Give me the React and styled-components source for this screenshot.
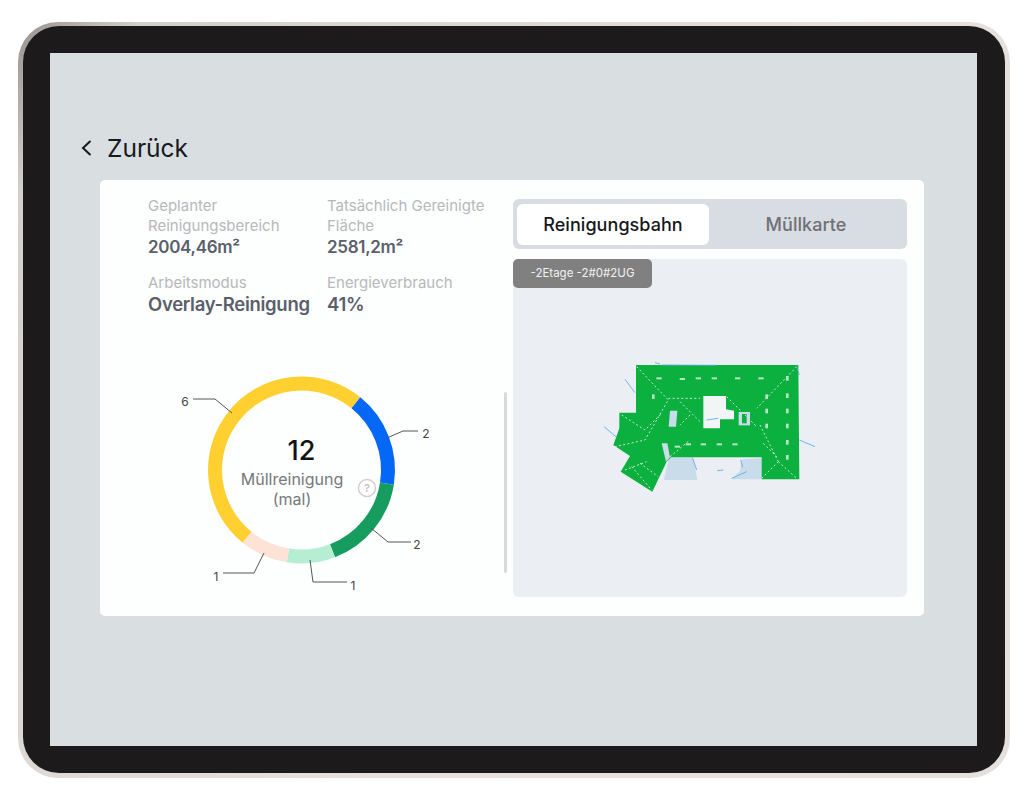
import React from "react";
import styled, { createGlobalStyle } from "styled-components";

const GlobalStyle = createGlobalStyle`
  html, body {
    margin: 0;
    padding: 0;
    background: #ffffff;
    font-family: Inter, "Noto Sans", sans-serif;
  }
`;

// Donut data, angles in degrees clockwise from the top
const segments = [
  { color: "#ffd02f", from: 219, to: 399 },
  { color: "#0567f5", from: 39, to: 99 },
  { color: "#169c5f", from: 99, to: 159 },
  { color: "#b5eed3", from: 159, to: 189 },
  { color: "#fde3d5", from: 189, to: 219 },
];

const leaders = [
  { points: "28,39 50,39 67,53", value: 6, x: 20, y: 46 },
  { points: "222,78 238,71 253,71", value: 2, x: 261, y: 78 },
  { points: "206,168 223,182 246,182", value: 2, x: 252, y: 189 },
  { points: "145,200 148,222 182,222", value: 1, x: 188, y: 230 },
  { points: "99,193 89,213 58,213", value: 1, x: 51, y: 221 },
];

const arcPath = (from, to) => {
  const cx = 136.5;
  const cy = 110;
  const r = 86.5;
  const point = (deg) => {
    const a = ((deg - 90) * Math.PI) / 180;
    return `${cx + r * Math.cos(a)} ${cy + r * Math.sin(a)}`;
  };
  return `M ${point(from)} A ${r} ${r} 0 ${to - from > 180 ? 1 : 0} 1 ${point(to)}`;
};

const dashes = [
  [207, 85], [277, 87], [325, 85], [373, 85], [443, 85], [513, 85],
  [340, 283], [388, 283], [435, 283], [262, 290], [295, 283],
];
const sideDashes = [
  [592, 85], [592, 137], [592, 183], [592, 228], [592, 277], [592, 322],
  [530, 140], [530, 183], [530, 228], [190, 140],
];
const dotted = [
  "140,50 235,150 165,270 75,290",
  "620,50 500,175",
  "565,335 515,385",
  "565,335 620,385",
  "510,225 565,335",
  "95,195 165,240 215,190",
  "125,350 185,420",
  "150,340 205,380",
  "105,360 170,335",
  "240,320 300,270",
  "410,140 500,230",
  "270,155 330,215",
  "300,195 270,225",
  "235,145 330,145",
  "520,280 560,320",
];
const scatter = [
  "105,88 135,128",
  "42,230 80,262",
  "628,270 675,290",
  "195,38 210,42",
  "215,45 380,46",
  "308,325 320,360",
  "452,330 458,352",
  "425,385 470,365",
  "382,362 400,360",
  "620,50 628,75",
  "350,210 385,205",
];

const MapDrawing = () => (
  <MapSvg viewBox="0 0 720 450">
    <polygon points="238,322 310,322 322,390 222,390" fill="#c9dcea" />
    <polygon points="515,325 515,388 425,388 450,362 455,328" fill="#c9dcea" />
    <polygon
      points="138,45 625,45 628,388 515,388 515,322 243,322 230,335 187,425 92,365 120,318 70,285 88,235 88,188 138,188"
      fill="#0bb03f"
    />
    <polygon points="215,280 232,280 240,322 228,335" fill="#c9dcea" />
    <polygon
      points="340,138 408,138 408,178 432,182 432,208 390,208 390,235 340,235"
      fill="#f2f5f6"
    />
    <polygon points="240,182 262,182 258,230 236,230" fill="#c9dcea" />
    <polygon points="446,186 480,186 480,226 446,226" fill="#c9dcea" />
    <polygon points="456,192 470,192 470,220 456,220" fill="#0bb03f" />
    {scatter.map((points) => (
      <Scatter key={points} points={points} />
    ))}
    {dotted.map((points) => (
      <Dotted key={points} points={points} />
    ))}
    {dashes.map(([x, y]) => (
      <rect key={`${x}-${y}`} x={x - 8} y={y - 3} width="16" height="6" fill="#b9e2c6" />
    ))}
    {sideDashes.map(([x, y]) => (
      <rect key={`${x}-${y}`} x={x - 4} y={y - 7} width="8" height="14" fill="#b9e2c6" />
    ))}
  </MapSvg>
);

const App = () => {
  return (
    <>
      <GlobalStyle />
      <Device>
        <Bezel>
          <Screen>
            <BackRow>
              <svg width="14" height="20" viewBox="0 0 14 20">
                <path d="M10.5 3 L3 10 L10.5 17" fill="none" stroke="#17191c" strokeWidth="2" />
              </svg>
              <BackLabel>Zurück</BackLabel>
            </BackRow>
            <Card>
              <LeftColumn>
                <Stats>
                  <Stat>
                    <StatLabel>Geplanter Reinigungsbereich</StatLabel>
                    <StatValue>2004,46m²</StatValue>
                  </Stat>
                  <Stat>
                    <StatLabel>Tatsächlich Gereinigte Fläche</StatLabel>
                    <StatValue>2581,2m²</StatValue>
                  </Stat>
                  <Stat>
                    <StatLabel>Arbeitsmodus</StatLabel>
                    <StatValue $large>Overlay-Reinigung</StatValue>
                  </Stat>
                  <Stat>
                    <StatLabel>Energieverbrauch</StatLabel>
                    <StatValue $large>41%</StatValue>
                  </Stat>
                </Stats>
                <Chart>
                  <svg width="280" height="240" viewBox="0 0 280 240">
                    {segments.map((s) => (
                      <path
                        key={s.color}
                        d={arcPath(s.from, s.to)}
                        fill="none"
                        stroke={s.color}
                        strokeWidth="14"
                      />
                    ))}
                    {leaders.map((l) => (
                      <g key={l.points}>
                        <polyline points={l.points} fill="none" stroke="#555" strokeWidth="1" />
                        <ChartNumber x={l.x} y={l.y}>
                          {l.value}
                        </ChartNumber>
                      </g>
                    ))}
                    <circle cx="202" cy="128" r="8.5" fill="#fff" stroke="#cfcfcf" strokeWidth="1.5" />
                    <HelpMark x="202" y="132">
                      ?
                    </HelpMark>
                  </svg>
                  <ChartCenter>
                    <ChartTotal>12</ChartTotal>
                    <ChartCaption>Müllreinigung</ChartCaption>
                    <ChartCaption>(mal)</ChartCaption>
                  </ChartCenter>
                </Chart>
                <ScrollThumb />
              </LeftColumn>
              <RightColumn>
                <Tabs>
                  <Tab $active>Reinigungsbahn</Tab>
                  <Tab>Müllkarte</Tab>
                </Tabs>
                <MapPanel>
                  <FloorTag>-2Etage -2#0#2UG</FloorTag>
                  <MapDrawing />
                </MapPanel>
              </RightColumn>
            </Card>
          </Screen>
        </Bezel>
      </Device>
    </>
  );
};

const Device = styled.div`
  box-sizing: border-box;
  width: 992px;
  height: 756px;
  margin: 22px 0 0 18px;
  padding: 4px 5px 5px 5px;
  border-radius: 40px;
  background: linear-gradient(125deg, #96918d 0%, #d3cfcb 8%, #e6e1dd 60%, #e4e0de 100%);
`;

const Bezel = styled.div`
  box-sizing: border-box;
  height: 100%;
  padding: 27px 28px 27px 27px;
  border-radius: 36px;
  background: #1c1a1b;
`;

const Screen = styled.div`
  box-sizing: border-box;
  height: 100%;
  padding: 78px 0 0 30px;
  background: #d9dee1;
`;

const BackRow = styled.div`
  display: flex;
  align-items: center;
  gap: 13px;
  height: 34px;
  margin-bottom: 15px;
`;

const BackLabel = styled.span`
  font-size: 24.5px;
  font-weight: 400;
  color: #17191c;
`;

const Card = styled.div`
  position: relative;
  display: flex;
  box-sizing: border-box;
  width: 824px;
  height: 436px;
  padding: 16px 17px 19px 0;
  margin-left: 20px;
  border-radius: 5px;
  background: #fdfefe;
`;

const LeftColumn = styled.div`
  width: 413px;
  flex: none;
  padding-left: 48px;
  box-sizing: border-box;
`;

const Stats = styled.div`
  display: grid;
  grid-template-columns: 179px 170px;
  row-gap: 15px;
`;

const Stat = styled.div`
  display: flex;
  flex-direction: column;
`;

const StatLabel = styled.div`
  font-size: 15px;
  line-height: 20px;
  color: #b6b8bb;
`;

const StatValue = styled.div`
  font-size: ${(p) => (p.$large ? "18.5px" : "17px")};
  line-height: 22px;
  font-weight: 600;
  letter-spacing: -0.3px;
  color: #5a5f6a;
`;

const Chart = styled.div`
  position: relative;
  width: 280px;
  height: 240px;
  margin: 45px 0 0 17px;
`;

const ChartCenter = styled.div`
  position: absolute;
  left: 36.5px;
  top: 73px;
  width: 200px;
  display: flex;
  flex-direction: column;
  align-items: center;
`;

const ChartTotal = styled.div`
  font-size: 27px;
  line-height: 36px;
  font-weight: 500;
  color: #111316;
`;

const ChartCaption = styled.div`
  margin-right: 19px;
  font-size: 16px;
  line-height: 20px;
  color: #77797c;
`;

const ChartNumber = styled.text`
  font-size: 12px;
  fill: #444;
  text-anchor: middle;
`;

const HelpMark = styled.text`
  font-size: 11px;
  font-weight: 600;
  fill: #c4c4c4;
  text-anchor: middle;
`;

const ScrollThumb = styled.div`
  position: absolute;
  left: 404px;
  top: 212px;
  width: 3px;
  height: 181px;
  border-radius: 2px;
  background: #d9d9d9;
`;

const RightColumn = styled.div`
  width: 394px;
  flex: none;
  display: flex;
  flex-direction: column;
  gap: 10px;
  padding-top: 3px;
`;

const Tabs = styled.div`
  display: flex;
  box-sizing: border-box;
  height: 50px;
  padding: 5px 4px 4px;
  border-radius: 6px;
  background: #d8dce3;
`;

const Tab = styled.div`
  display: flex;
  align-items: center;
  justify-content: center;
  box-sizing: border-box;
  width: ${(p) => (p.$active ? "192px" : "auto")};
  flex: ${(p) => (p.$active ? "none" : "1")};
  border-radius: 6px;
  font-size: 18px;
  font-weight: 450;
  letter-spacing: 0.05px;
  color: ${(p) => (p.$active ? "#15171a" : "#6e7074")};
  background: ${(p) => (p.$active ? "#ffffff" : "transparent")};
`;

const MapPanel = styled.div`
  flex: 1;
  border-radius: 6px;
  background: #ebeef2;
`;

const FloorTag = styled.div`
  box-sizing: border-box;
  width: 139px;
  height: 29px;
  line-height: 29px;
  text-align: center;
  border-radius: 5px;
  font-size: 11.5px;
  color: #f2f2f2;
  background: #808080;
`;

const MapSvg = styled.svg`
  display: block;
  width: 240px;
  height: 150px;
  margin: 62px 0 0 77px;
  filter: blur(0.6px);
`;

const Dotted = styled.polyline`
  fill: none;
  stroke: #c9e8d2;
  stroke-width: 3;
  stroke-dasharray: 6 7;
`;

const Scatter = styled.polyline`
  fill: none;
  stroke: #5aa7ea;
  stroke-width: 2.5;
`;

export default App;
